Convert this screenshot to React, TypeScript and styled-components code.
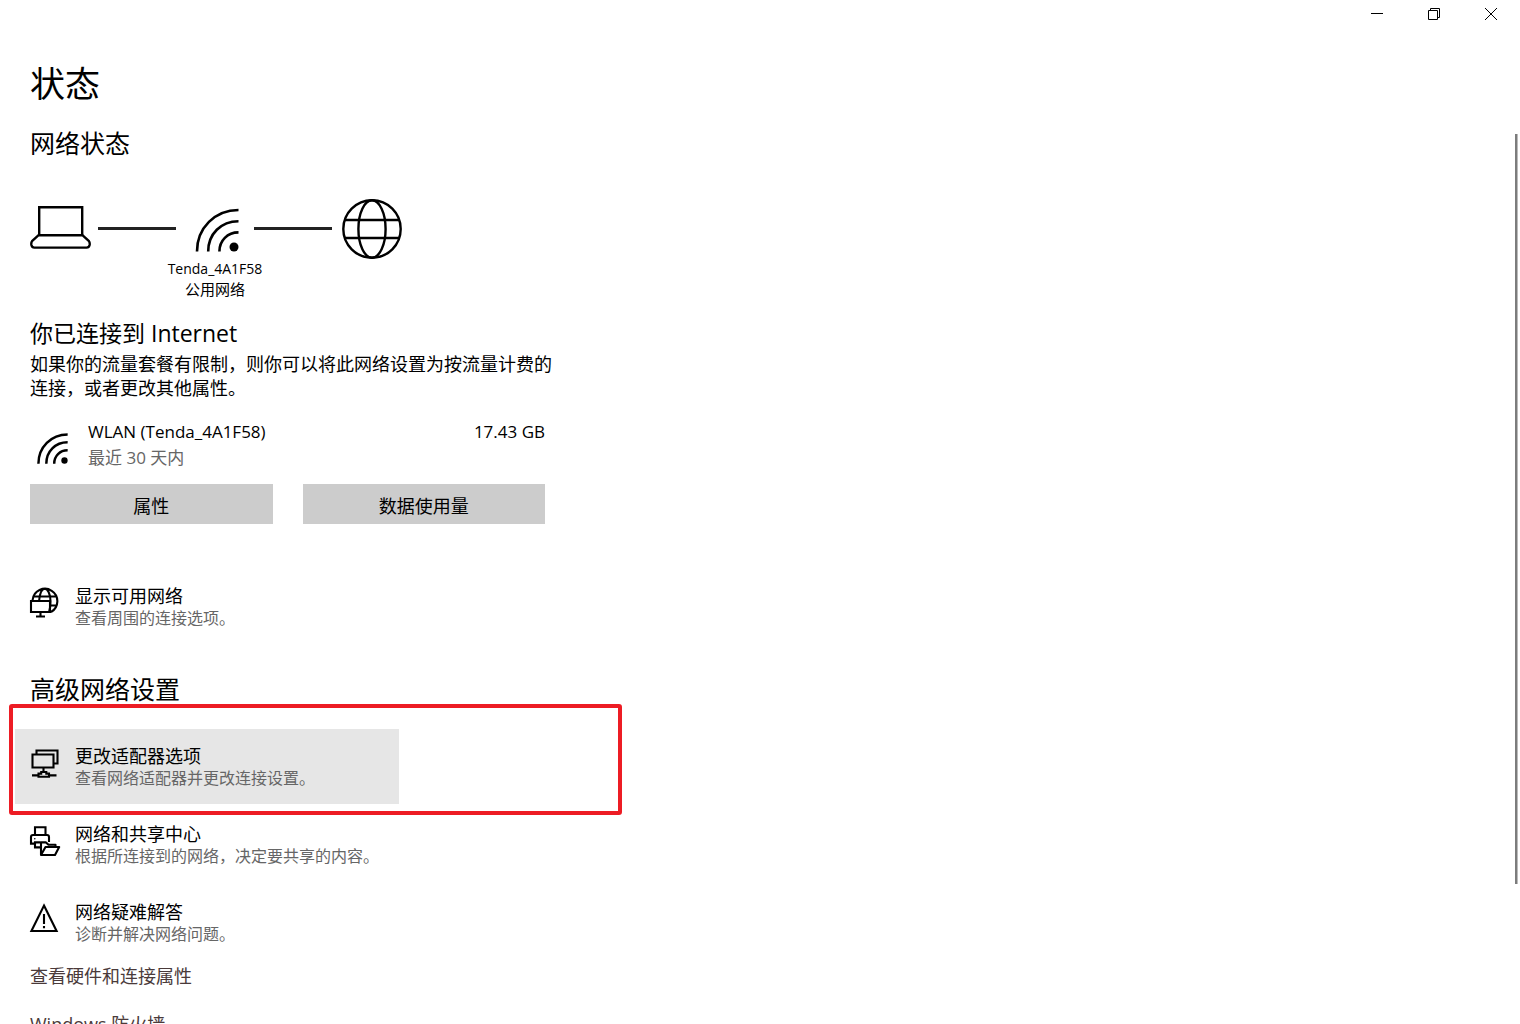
import React from 'react';
import styled, { createGlobalStyle } from 'styled-components';

const GlobalStyle = createGlobalStyle`
  * { box-sizing: border-box; }
  body {
    margin: 0;
    background: #fff;
    color: #000;
    font-family: "Open Sans", "Noto Sans CJK SC", sans-serif;
    font-size: 18px;
  }
  h1, h2, h3, p { margin: 0; font-weight: 400; }
  button { font: inherit; color: inherit; border: 0; border-radius: 0; }
  svg { display: block; fill: none; stroke: currentColor; }
`;

const Window = styled.div`
  display: flex;
  flex-direction: column;
  height: 100vh;
  overflow: hidden;
`;

const TitleBar = styled.header`
  display: flex;
  justify-content: flex-end;
  flex: none;
  padding-right: 1px;
`;

const CaptionButton = styled.button`
  display: grid;
  place-items: center;
  width: 57px;
  height: 28px;
  padding: 0;
  background: transparent;
`;

const PageTitle = styled.h1`
  flex: none;
  padding: 30px 30px 15px;
  font-size: 35px;
  line-height: 52px;
`;

const Body = styled.div`
  display: flex;
  flex: 1;
  min-height: 0;
`;

const Content = styled.main`
  flex: 1;
  padding-left: 15px;
  min-width: 0;
  overflow: hidden;
`;

const Section = styled.section`
  padding-left: 15px;
  max-width: 545px;
`;

const SectionTitle = styled.h2`
  font-size: 25px;
  line-height: 36px;
`;

const AdvancedTitle = styled(SectionTitle)`
  padding: 27px 0 0 15px;
`;

const NetworkMap = styled.div`
  display: grid;
  grid-template-columns: 68px repeat(3, 78px) 70px;
  align-items: center;
  margin-top: 38px;
`;

const Link = styled.div`
  height: 3px;
  margin-bottom: 1px;
  background: #222;
`;

const RouterCell = styled.div`
  justify-self: center;
  padding: 2px 0 0 4px;
`;

const Trailing = styled.div`
  justify-self: end;
`;

const NetworkLabel = styled.div`
  grid-column: 2 / 5;
  text-align: center;
  font-size: 15px;
  line-height: 20px;
`;

const NetworkName = styled.div`
  font-size: 14px;
`;

const StatusTitle = styled.h3`
  margin-top: 17px;
  padding-bottom: 2px;
  font-size: 23px;
  line-height: 34px;
`;

const Paragraph = styled.p`
  line-height: 24px;
`;

const Usage = styled.div`
  display: flex;
  width: 515px;
  max-width: 100%;
  margin-top: 19px;
  font-size: 17px;
  line-height: 26px;
`;

const UsageIcon = styled.div`
  width: 58px;
  padding: 14px 0 0 7px;
`;

const UsageText = styled.div`
  flex: 1;
`;

const Muted = styled.div`
  color: #666;
`;

const Actions = styled.div`
  display: grid;
  grid-template-columns: 1fr 1fr;
  gap: 30px;
  width: 515px;
  max-width: 100%;
  margin-top: 13px;
`;

const ActionButton = styled.button`
  height: 40px;
  padding: 2px 0 0;
  background: #ccc;
`;

const Group = styled.div<{ $top: number }>`
  display: flex;
  flex-direction: column;
  gap: 3px;
  margin-top: ${(p) => p.$top}px;
`;

const Highlighted = styled.div`
  position: relative;
  width: 384px;
`;

const Frame = styled.div`
  position: absolute;
  top: -25px;
  left: -6px;
  width: 613px;
  height: 111px;
  border: 4px solid #ed1c24;
  border-radius: 3px;
  pointer-events: none;
`;

const Option = styled.button<{ $active?: boolean }>`
  display: flex;
  align-items: center;
  gap: 14px;
  width: 384px;
  height: 75px;
  padding: 0 14px;
  text-align: left;
  background: ${(p) => (p.$active ? '#e6e6e6' : 'transparent')};
`;

const OptionText = styled.span`
  display: flex;
  flex-direction: column;
  line-height: 22px;
`;

const OptionHint = styled.span`
  font-size: 16px;
  color: #666;
  white-space: nowrap;
`;

const Links = styled.nav`
  display: flex;
  flex-direction: column;
  align-items: flex-start;
  gap: 22px;
  padding-left: 15px;
  margin-top: 3px;
`;

const TextLink = styled.a`
  color: #4a3a3a;
  line-height: 26px;
  text-decoration: none;
`;

const ScrollTrack = styled.div`
  flex: none;
  width: 5px;
  padding-top: 9px;
`;

const ScrollThumb = styled.div`
  width: 3px;
  height: 84.3%;
  background: #7c7c7c;
  border-right: 1px solid #bbb;
`;

const LaptopIcon = () => (
  <svg width="61" height="60" viewBox="0 0 61 60" strokeWidth="2.4" strokeLinejoin="round">
    <path d="M9.2 36.2V8.2H52.2V36.2" strokeLinejoin="miter" />
    <path d="M8.6 36.2H52.4L59 42.2Q60 43.4 59.6 46Q59 48.6 56.6 48.6H4.4Q2 48.6 1.4 46Q1 43.4 2 42.2Z" />
  </svg>
);

const WifiIcon = ({ size, weight }: { size: number; weight: number }) => (
  <svg width={size} height={size} viewBox="0 0 44 44" strokeWidth={weight}>
    <path d="M2 43.5C2 20 20 2 43.5 2M13.2 43.5C13.2 26 26 13.2 43.5 13.2M24.4 43.5C24.4 32.5 32.5 24.4 43.5 24.4" />
    <circle cx="39" cy="39" r="4.5" fill="currentColor" stroke="none" />
  </svg>
);

const GlobeIcon = () => (
  <svg width="60" height="60" viewBox="0 0 60 60" strokeWidth="2.4">
    <circle cx="30" cy="30" r="28.7" />
    <ellipse cx="30" cy="30" rx="13.6" ry="28.7" />
    <path d="M2.5 21H57.5M2.5 39H57.5" />
  </svg>
);

const OptionSvg = ({ children }: { children: React.ReactNode }) => (
  <svg width="32" height="39" viewBox="0 0 32 39" strokeWidth="2.1" aria-hidden="true">
    {children}
  </svg>
);

const AvailableIcon = () => (
  <OptionSvg>
    <path d="M3.6 13A12.4 12.4 0 1 1 22 25M10.2 13C11 6 13 1.8 15.8 1.8S21.5 7 21.5 14.2C21.5 19 21 22 20 25.5M5 9.5H27M21 18.5H27.5" />
    <path d="M2 14H21V25H2ZM11.5 25V29.5M7 29.5H16" />
  </OptionSvg>
);

const AdapterIcon = () => (
  <OptionSvg>
    <path d="M3.5 7.5H24.5V20.5H3.5ZM7.5 7V3.5H28.5V16.5H25M14.5 20.5V25M3 28.4H9.5M20 28.4H27.5M9.5 26.6H12.2V25H17.3V26.6H20V29.8H9.5Z" />
  </OptionSvg>
);

const SharingIcon = () => (
  <OptionSvg>
    <path d="M6 10V2.2H16.5V10M6 18.6H2V12Q2 10 4 10H18Q20 10 20 12V17M11.5 17.4H6V22.4H11.5" />
    <circle cx="5.8" cy="13.8" r="0.8" fill="currentColor" stroke="none" />
    <path d="M12 30V17.4H17L19.5 19.8H26.5V22.5M12 30L16.5 22H30.2L26 30Z" strokeLinejoin="round" />
  </OptionSvg>
);

const WarningIcon = () => (
  <OptionSvg>
    <path d="M15 2.5L27.6 28H2.4ZM15 11V21M15 23V25.2" />
  </OptionSvg>
);

interface OptionRowProps {
  icon: React.ReactNode;
  title: string;
  hint: string;
  active?: boolean;
}

const OptionRow = ({ icon, title, hint, active }: OptionRowProps) => (
  <Option type="button" $active={active}>
    {icon}
    <OptionText>
      <span>{title}</span>
      <OptionHint>{hint}</OptionHint>
    </OptionText>
  </Option>
);

export default function App() {
  return (
    <Window lang="zh-CN">
      <GlobalStyle />
      <TitleBar>
        <CaptionButton type="button" aria-label="最小化">
          <svg width="12" height="12"><path d="M0 5.5H12" /></svg>
        </CaptionButton>
        <CaptionButton type="button" aria-label="还原">
          <svg width="12" height="12"><path d="M.5 2.5H9.5V11.5H.5ZM2.5 2.5V.5H11.5V9.5H9.5" /></svg>
        </CaptionButton>
        <CaptionButton type="button" aria-label="关闭">
          <svg width="12" height="12"><path d="M0 0L12 12M12 0L0 12" /></svg>
        </CaptionButton>
      </TitleBar>
      <PageTitle>状态</PageTitle>
      <Body>
        <Content>
          <Section>
            <SectionTitle>网络状态</SectionTitle>
            <NetworkMap>
              <LaptopIcon />
              <Link />
              <RouterCell><WifiIcon size={44} weight={2.6} /></RouterCell>
              <Link />
              <Trailing><GlobeIcon /></Trailing>
              <NetworkLabel>
                <NetworkName>Tenda_4A1F58</NetworkName>
                <div>公用网络</div>
              </NetworkLabel>
            </NetworkMap>
            <StatusTitle>你已连接到 Internet</StatusTitle>
            <Paragraph>如果你的流量套餐有限制，则你可以将此网络设置为按流量计费的连接，或者更改其他属性。</Paragraph>
            <Usage>
              <UsageIcon><WifiIcon size={31} weight={3.5} /></UsageIcon>
              <UsageText>
                <div>WLAN (Tenda_4A1F58)</div>
                <Muted>最近 30 天内</Muted>
              </UsageText>
              <div>17.43 GB</div>
            </Usage>
            <Actions>
              <ActionButton type="button">属性</ActionButton>
              <ActionButton type="button">数据使用量</ActionButton>
            </Actions>
          </Section>
          <Group $top={45}>
            <OptionRow icon={<AvailableIcon />} title="显示可用网络" hint="查看周围的连接选项。" />
          </Group>
          <AdvancedTitle>高级网络设置</AdvancedTitle>
          <Group $top={22}>
            <Highlighted>
              <OptionRow active icon={<AdapterIcon />} title="更改适配器选项" hint="查看网络适配器并更改连接设置。" />
              <Frame />
            </Highlighted>
            <OptionRow icon={<SharingIcon />} title="网络和共享中心" hint="根据所连接到的网络，决定要共享的内容。" />
            <OptionRow icon={<WarningIcon />} title="网络疑难解答" hint="诊断并解决网络问题。" />
          </Group>
          <Links>
            <TextLink href="#hardware">查看硬件和连接属性</TextLink>
            <TextLink href="#firewall">Windows 防火墙</TextLink>
          </Links>
        </Content>
        <ScrollTrack><ScrollThumb /></ScrollTrack>
      </Body>
    </Window>
  );
}
